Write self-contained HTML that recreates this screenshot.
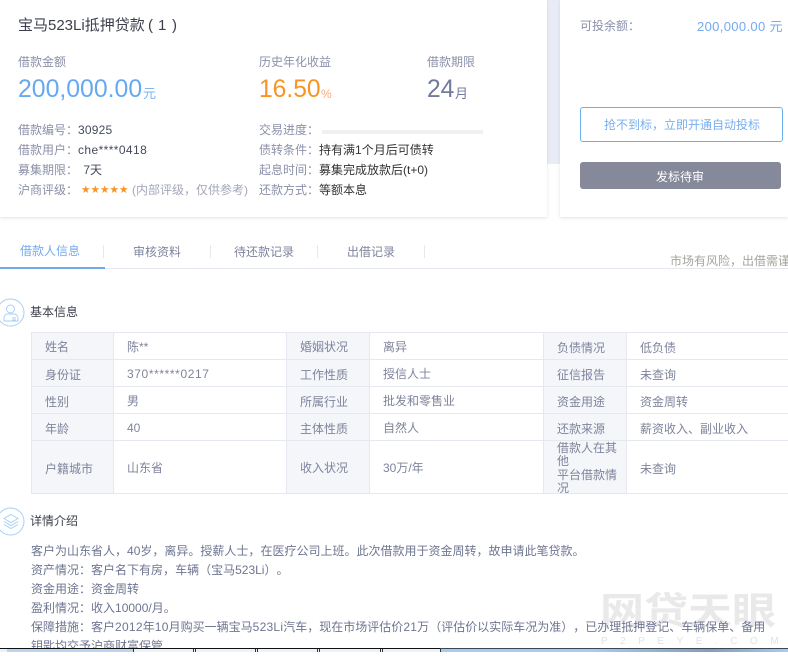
<!DOCTYPE html>
<html lang="zh-CN">
<head>
<meta charset="utf-8">
<style>
html,body{margin:0;padding:0;background:#fff}
body{width:788px;height:652px;position:relative;overflow:hidden;font-family:"Liberation Sans","Noto Sans CJK SC",sans-serif;font-size:12px;color:#7b8098;text-spacing-trim:space-all}
.t{position:absolute;white-space:nowrap;line-height:20px;height:20px}
.b{position:absolute}
.l{color:#8b90a8}
.d{color:#444a5e}
.k{color:#333}
.c{color:#7f849c}
.s{position:absolute;background:#e6e8f0}
.th{position:absolute;background:#f4f6fa}
i{font-style:normal;font-family:"Noto Sans CJK TC",sans-serif}
u{text-decoration:none;letter-spacing:.25px}
</style>
</head>
<body>
<!-- top cards -->
<div class="b" style="left:547px;top:0;width:13px;height:164px;background:#e9ecf5"></div>
<div class="b" style="left:0;top:0;width:547px;height:217px;background:#fff;box-shadow:0 1px 3px rgba(150,155,190,.3)"></div>
<div class="b" style="left:560px;top:0;width:228px;height:217px;background:#fff;box-shadow:0 1px 3px rgba(150,155,190,.3)"></div>

<div class="t" style="left:18px;top:16px;font-size:15px;color:#3c3f4c">宝马523Li抵押贷款</div>
<div class="t" style="left:148px;top:16px;font-size:15px;color:#3c3f4c">(</div>
<div class="t" style="left:158px;top:16px;font-size:15px;color:#3c3f4c">1</div>
<div class="t" style="left:172px;top:16px;font-size:15px;color:#3c3f4c">)</div>

<div class="t l" style="left:18px;top:52px">借款金额</div>
<div class="t" style="left:18px;top:75px;font-size:24.8px;line-height:30px;height:30px;color:#66a9f2">200,000.00</div>
<div class="t" style="left:143px;top:84px;font-size:13px;color:#7fb4f0">元</div>

<div class="t l" style="left:259px;top:52px">历史年化收益</div>
<div class="t" style="left:259px;top:75px;font-size:24.6px;line-height:30px;height:30px;color:#fb9322">16.50</div>
<div class="t" style="left:321px;top:84px;font-size:12px;color:#f8a877">%</div>

<div class="t l" style="left:427px;top:52px">借款期限</div>
<div class="t" style="left:427px;top:75px;font-size:24.6px;line-height:30px;height:30px;color:#727a9c">24</div>
<div class="t" style="left:455px;top:84px;font-size:13px;color:#727a9c">月</div>

<div class="t l" style="left:18px;top:120px">借款编号<i>：</i><span class="d" style="letter-spacing:.2px">30925</span></div>
<div class="t l" style="left:18px;top:140px">借款用户<i>：</i><span class="d" style="letter-spacing:.4px">che****0418</span></div>
<div class="t l" style="left:18px;top:160px">募集期限<i>：</i> <span class="d" style="margin-left:2px">7天</span></div>
<div class="t l" style="left:18px;top:180px">沪商评级<i>：</i></div>
<div class="t" style="left:81px;top:180px;font-size:10.6px;color:#fb9322;font-family:'DejaVu Sans',sans-serif">★★★★★</div>
<div class="t" style="left:132px;top:180px;color:#a3a7b8">(内部评级<i>，</i>仅供参考)</div>

<div class="t l" style="left:259px;top:120px">交易进度<i>：</i></div>
<div class="b" style="left:322px;top:130px;width:161px;height:4px;background:#f0f0f0"></div>
<div class="t l" style="left:259px;top:140px">债转条件<i>：</i><span class="k">持有满1个月后可债转</span></div>
<div class="t l" style="left:259px;top:160px">起息时间<i>：</i><span class="k">募集完成放款后(t+0)</span></div>
<div class="t l" style="left:259px;top:180px">还款方式<i>：</i><span class="k">等额本息</span></div>

<div class="t l" style="left:580px;top:16px">可投余额<i>：</i></div>
<div class="t" style="left:697px;top:17px;font-size:13px;letter-spacing:.35px;color:#74aaf0">200,000.00 元</div>
<div class="b" style="left:580px;top:107px;width:201px;height:33px;border:1px solid #6cb0f0;border-radius:3px"></div>
<div class="t" style="left:604px;top:115px;color:#79aef0">抢不到标<i>，</i>立即开通自动投标</div>
<div class="b" style="left:580px;top:162px;width:201px;height:27px;background:#858999;border-radius:3px"></div>
<div class="t" style="left:656px;top:167px;color:#fff">发标待审</div>

<!-- tabs -->
<div class="s" style="left:0;top:268px;width:788px;height:1px"></div>
<div class="b" style="left:0;top:267px;width:105px;height:2px;background:#6fabeb"></div>
<div class="t" style="left:20px;top:241px;color:#74aaf0">借款人信息</div>
<div class="t c" style="left:133px;top:242px">审核资料</div>
<div class="t c" style="left:234px;top:242px">待还款记录</div>
<div class="t c" style="left:347px;top:242px">出借记录</div>
<div class="s" style="left:103px;top:245px;width:1px;height:13px"></div>
<div class="s" style="left:210px;top:245px;width:1px;height:13px"></div>
<div class="s" style="left:317px;top:245px;width:1px;height:13px"></div>
<div class="s" style="left:424px;top:245px;width:1px;height:13px"></div>
<div class="t" style="left:670px;top:251px;color:#a4a49c">市场有风险<i>，</i>出借需谨慎</div>

<!-- section icons -->
<svg class="b" style="left:-3px;top:298px" width="28" height="30" viewBox="0 0 28 30" fill="none" stroke="#a6d0f6" stroke-width="1">
<circle cx="13.500" cy="14.500" r="13.500"/>
<circle cx="13.500" cy="11" r="4"/>
<path d="M7 23v-3c0-2.500 2-4 4-4h6c2 0 4 1.500 4 4v3z"/>
<path d="M15 20h4M15 22h4"/>
</svg>
<div class="t" style="left:30px;top:302px;color:#3c3f4c">基本信息</div>

<svg class="b" style="left:-3px;top:507px" width="28" height="30" viewBox="0 0 28 30" fill="none" stroke="#a6d0f6" stroke-width="1">
<circle cx="13.500" cy="14.500" r="13.500"/>
<path d="M14 7.500l7 4-7 4-7-4z"/>
<path d="M7 14.500l7 4 7-4"/>
<path d="M7 17.500l7 4 7-4"/>
</svg>
<div class="t" style="left:30px;top:511px;color:#3c3f4c">详情介绍</div>

<!-- table backgrounds -->
<div class="th" style="left:31px;top:332px;width:82px;height:162px"></div>
<div class="th" style="left:286px;top:332px;width:83px;height:162px"></div>
<div class="th" style="left:543px;top:332px;width:83px;height:162px"></div>
<!-- table horizontal rules -->
<div class="s" style="left:31px;top:332px;width:757px;height:1px"></div>
<div class="s" style="left:31px;top:359px;width:757px;height:1px"></div>
<div class="s" style="left:31px;top:386px;width:757px;height:1px"></div>
<div class="s" style="left:31px;top:413px;width:757px;height:1px"></div>
<div class="s" style="left:31px;top:440px;width:757px;height:1px"></div>
<div class="s" style="left:31px;top:493px;width:757px;height:1px"></div>
<!-- table vertical rules -->
<div class="s" style="left:31px;top:332px;width:1px;height:162px"></div>
<div class="s" style="left:113px;top:332px;width:1px;height:162px"></div>
<div class="s" style="left:286px;top:332px;width:1px;height:162px"></div>
<div class="s" style="left:369px;top:332px;width:1px;height:162px"></div>
<div class="s" style="left:543px;top:332px;width:1px;height:162px"></div>
<div class="s" style="left:626px;top:332px;width:1px;height:162px"></div>

<div class="t c" style="left:45px;top:337px">姓名</div>
<div class="t c" style="left:127px;top:337px">陈**</div>
<div class="t c" style="left:300px;top:337px">婚姻状况</div>
<div class="t c" style="left:383px;top:337px">离异</div>
<div class="t c" style="left:557px;top:338px">负债情况</div>
<div class="t c" style="left:640px;top:338px">低负债</div>

<div class="t c" style="left:45px;top:365px">身份证</div>
<div class="t c" style="left:127px;top:364px;letter-spacing:.6px">370******0217</div>
<div class="t c" style="left:300px;top:365px">工作性质</div>
<div class="t c" style="left:383px;top:364px">授信人士</div>
<div class="t c" style="left:557px;top:365px">征信报告</div>
<div class="t c" style="left:640px;top:365px">未查询</div>

<div class="t c" style="left:45px;top:392px">性别</div>
<div class="t c" style="left:127px;top:391px">男</div>
<div class="t c" style="left:300px;top:392px">所属行业</div>
<div class="t c" style="left:383px;top:391px">批发和零售业</div>
<div class="t c" style="left:557px;top:392px">资金用途</div>
<div class="t c" style="left:640px;top:392px">资金周转</div>

<div class="t c" style="left:45px;top:419px">年龄</div>
<div class="t c" style="left:127px;top:418px">40</div>
<div class="t c" style="left:300px;top:419px">主体性质</div>
<div class="t c" style="left:383px;top:418px">自然人</div>
<div class="t c" style="left:557px;top:419px">还款来源</div>
<div class="t c" style="left:640px;top:419px">薪资收入、副业收入</div>

<div class="t c" style="left:45px;top:459px">户籍城市</div>
<div class="t c" style="left:127px;top:458px">山东省</div>
<div class="t c" style="left:300px;top:458px">收入状况</div>
<div class="t c" style="left:383px;top:458px">30万/年</div>
<div class="b c" style="left:557px;top:442px;width:62px;line-height:13.400px">借款人在其他<br>平台借款情况</div>
<div class="t c" style="left:640px;top:459px">未查询</div>

<!-- watermark -->
<div class="b" style="left:600px;top:590px;white-space:nowrap;line-height:44px;height:44px;font-size:44px;font-weight:700;color:#e9e9e9;transform:scaleY(.85);transform-origin:0 50%">网贷天眼</div>
<div class="t" style="left:601px;top:632px;font-size:10px;letter-spacing:12.500px;color:#e2e2e2">P2PEYE.COM</div>

<!-- detail text -->
<div class="t" style="left:31px;top:541px;color:#6e7591">客户为山东省人<i>，</i>40岁<i>，</i>离异。授薪人士<i>，</i>在医疗公司上班。此次借款用于资金周转<i>，</i>故申请此笔贷款。</div>
<div class="t" style="left:31px;top:560px;color:#6e7591">资产情况<i>：</i>客户名下有房<i>，</i>车辆<i>（</i>宝马523Li<i>）</i>。</div>
<div class="t" style="left:31px;top:579px;color:#6e7591">资金用途<i>：</i>资金周转</div>
<div class="t" style="left:31px;top:598px;color:#6e7591">盈利情况<i>：</i>收入10000/月。</div>
<div class="t" style="left:31px;top:617px;color:#6e7591">保障措施<i>：</i>客户<u>2012</u>年<u>10</u>月购买一辆宝马<u>523Li</u>汽车<i>，</i>现在市场评估价<u>21</u>万<i>（</i>评估价以实际车况为准<i>）</i><i>，</i>已办理抵押登记、车辆保单、备用</div>
<div class="t" style="left:31px;top:636px;color:#6e7591">钥匙均交予沪商财富保管</div>

<!-- taskbar strip -->
<div class="b" style="left:0;top:648px;width:788px;height:4px;background:linear-gradient(90deg,#a9cbee 0%,#a9cbee 75%,#7f9dbd 90%,#a9cbee 100%)"></div>
<div class="b" style="left:0;top:648px;width:788px;height:1px;background:#3c4654"></div>
<div class="b" style="left:0;top:648px;width:440px;height:1px;background:#111"></div>
<div class="b" style="left:0;top:649px;width:440px;height:3px;background:#eaf2fb"></div>
<div class="b" style="left:7px;top:649px;width:126px;height:3px;background:#bcd5ee"></div>
<div class="b" style="left:133px;top:649px;width:1px;height:3px;background:#333"></div>
<div class="b" style="left:193px;top:649px;width:1px;height:3px;background:#333"></div>
<div class="b" style="left:195px;top:649px;width:1px;height:3px;background:#333"></div>
<div class="b" style="left:255px;top:649px;width:1px;height:3px;background:#333"></div>
<div class="b" style="left:257px;top:649px;width:1px;height:3px;background:#333"></div>
<div class="b" style="left:317px;top:649px;width:1px;height:3px;background:#333"></div>
<div class="b" style="left:319px;top:649px;width:1px;height:3px;background:#333"></div>
<div class="b" style="left:380px;top:649px;width:1px;height:3px;background:#333"></div>
<div class="b" style="left:382px;top:649px;width:1px;height:3px;background:#333"></div>
<div class="b" style="left:440px;top:649px;width:1px;height:3px;background:#333"></div>
</body>
</html>
